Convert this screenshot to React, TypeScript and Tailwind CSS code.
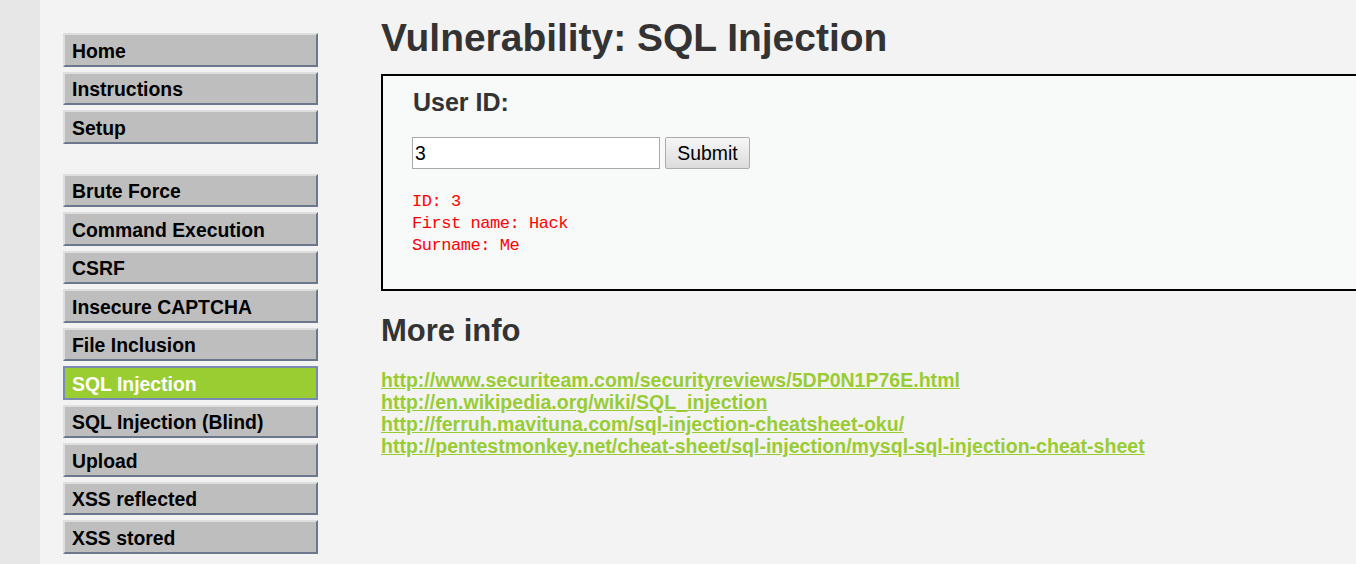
import React from 'react';

const MENU_TOP = ['Home', 'Instructions', 'Setup'];
const MENU_VULNS = [
  'Brute Force',
  'Command Execution',
  'CSRF',
  'Insecure CAPTCHA',
  'File Inclusion',
  'SQL Injection',
  'SQL Injection (Blind)',
  'Upload',
  'XSS reflected',
  'XSS stored',
];

const LINKS = [
  'http://www.securiteam.com/securityreviews/5DP0N1P76E.html',
  'http://en.wikipedia.org/wiki/SQL_injection',
  'http://ferruh.mavituna.com/sql-injection-cheatsheet-oku/',
  'http://pentestmonkey.net/cheat-sheet/sql-injection/mysql-sql-injection-cheat-sheet',
];

const MenuItem: React.FC<{ label: string; active?: boolean }> = ({ label, active }) => (
  <div
    className={
      active
        ? 'h-[33.5px] mb-[5px] border-2 border-[#7b8ab0] bg-[#9acd32] text-white pl-[7px] pt-[4.5px] leading-[22px] font-bold text-[19.4px]'
        : 'h-[33.5px] mb-[5px] border-2 border-t-[#dedede] border-l-[#dedede] border-b-[#6b778c] border-r-[#6b778c] bg-[#bebebe] text-black pl-[7px] pt-[4.5px] leading-[22px] font-bold text-[19.4px]'
    }
  >
    {label}
  </div>
);

const App: React.FC = () => {
  return (
    <div className="flex h-[564px] w-[1356px] overflow-hidden bg-[#f3f3f3] font-['Liberation_Sans',Arial,sans-serif]">
      <div className="w-[40px] shrink-0 bg-[#e7e7e7]"></div>

      <div className="ml-[23px] w-[255px] shrink-0 pt-[33px]">
        {MENU_TOP.map((m) => (
          <MenuItem key={m} label={m} />
        ))}
        <div className="h-[25px]"></div>
        {MENU_VULNS.map((m) => (
          <MenuItem key={m} label={m} active={m === 'SQL Injection'} />
        ))}
      </div>

      <div className="ml-[63px] shrink-0 pt-[16px]">
        <h1 className="text-[38.95px] leading-[44px] font-bold text-[#333333]">Vulnerability: SQL Injection</h1>

        <div className="mt-[14px] w-[1000px] border-2 border-black bg-[#f8f9f9] pl-[29px] pt-[10.7px] pb-[32.6px]">
          <div className="ml-px text-[25px] leading-[30px] font-bold text-[#333333]">User ID:</div>
          <div className="mt-[20.3px] flex gap-[5px]">
            <div className="h-[32px] w-[248px] border border-[#a9a9a9] bg-white pl-[2px] text-[19.4px] leading-[30px] text-black">
              3
            </div>
            <button className="h-[32px] w-[85px] rounded-[2px] border border-[#acacac] bg-gradient-to-b from-[#f6f6f6] to-[#dcdcdc] text-[19.4px] leading-[30px] text-black">
              Submit
            </button>
          </div>
          <pre className="mt-[22.3px] font-['Liberation_Mono',monospace] text-[17px] leading-[21.7px] tracking-[-0.45px] text-[#ff0000]">
            {'ID: 3\nFirst name: Hack\nSurname: Me'}
          </pre>
        </div>

        <h2 className="mt-[22.4px] text-[31px] leading-[36px] font-bold text-[#333333]">More info</h2>

        <ul className="mt-[19.3px]">
          {LINKS.map((l) => (
            <li key={l} className="text-[19.55px] leading-[22px] font-bold text-[#99cc33] underline">
              {l}
            </li>
          ))}
        </ul>
      </div>
    </div>
  );
};

export default App;
